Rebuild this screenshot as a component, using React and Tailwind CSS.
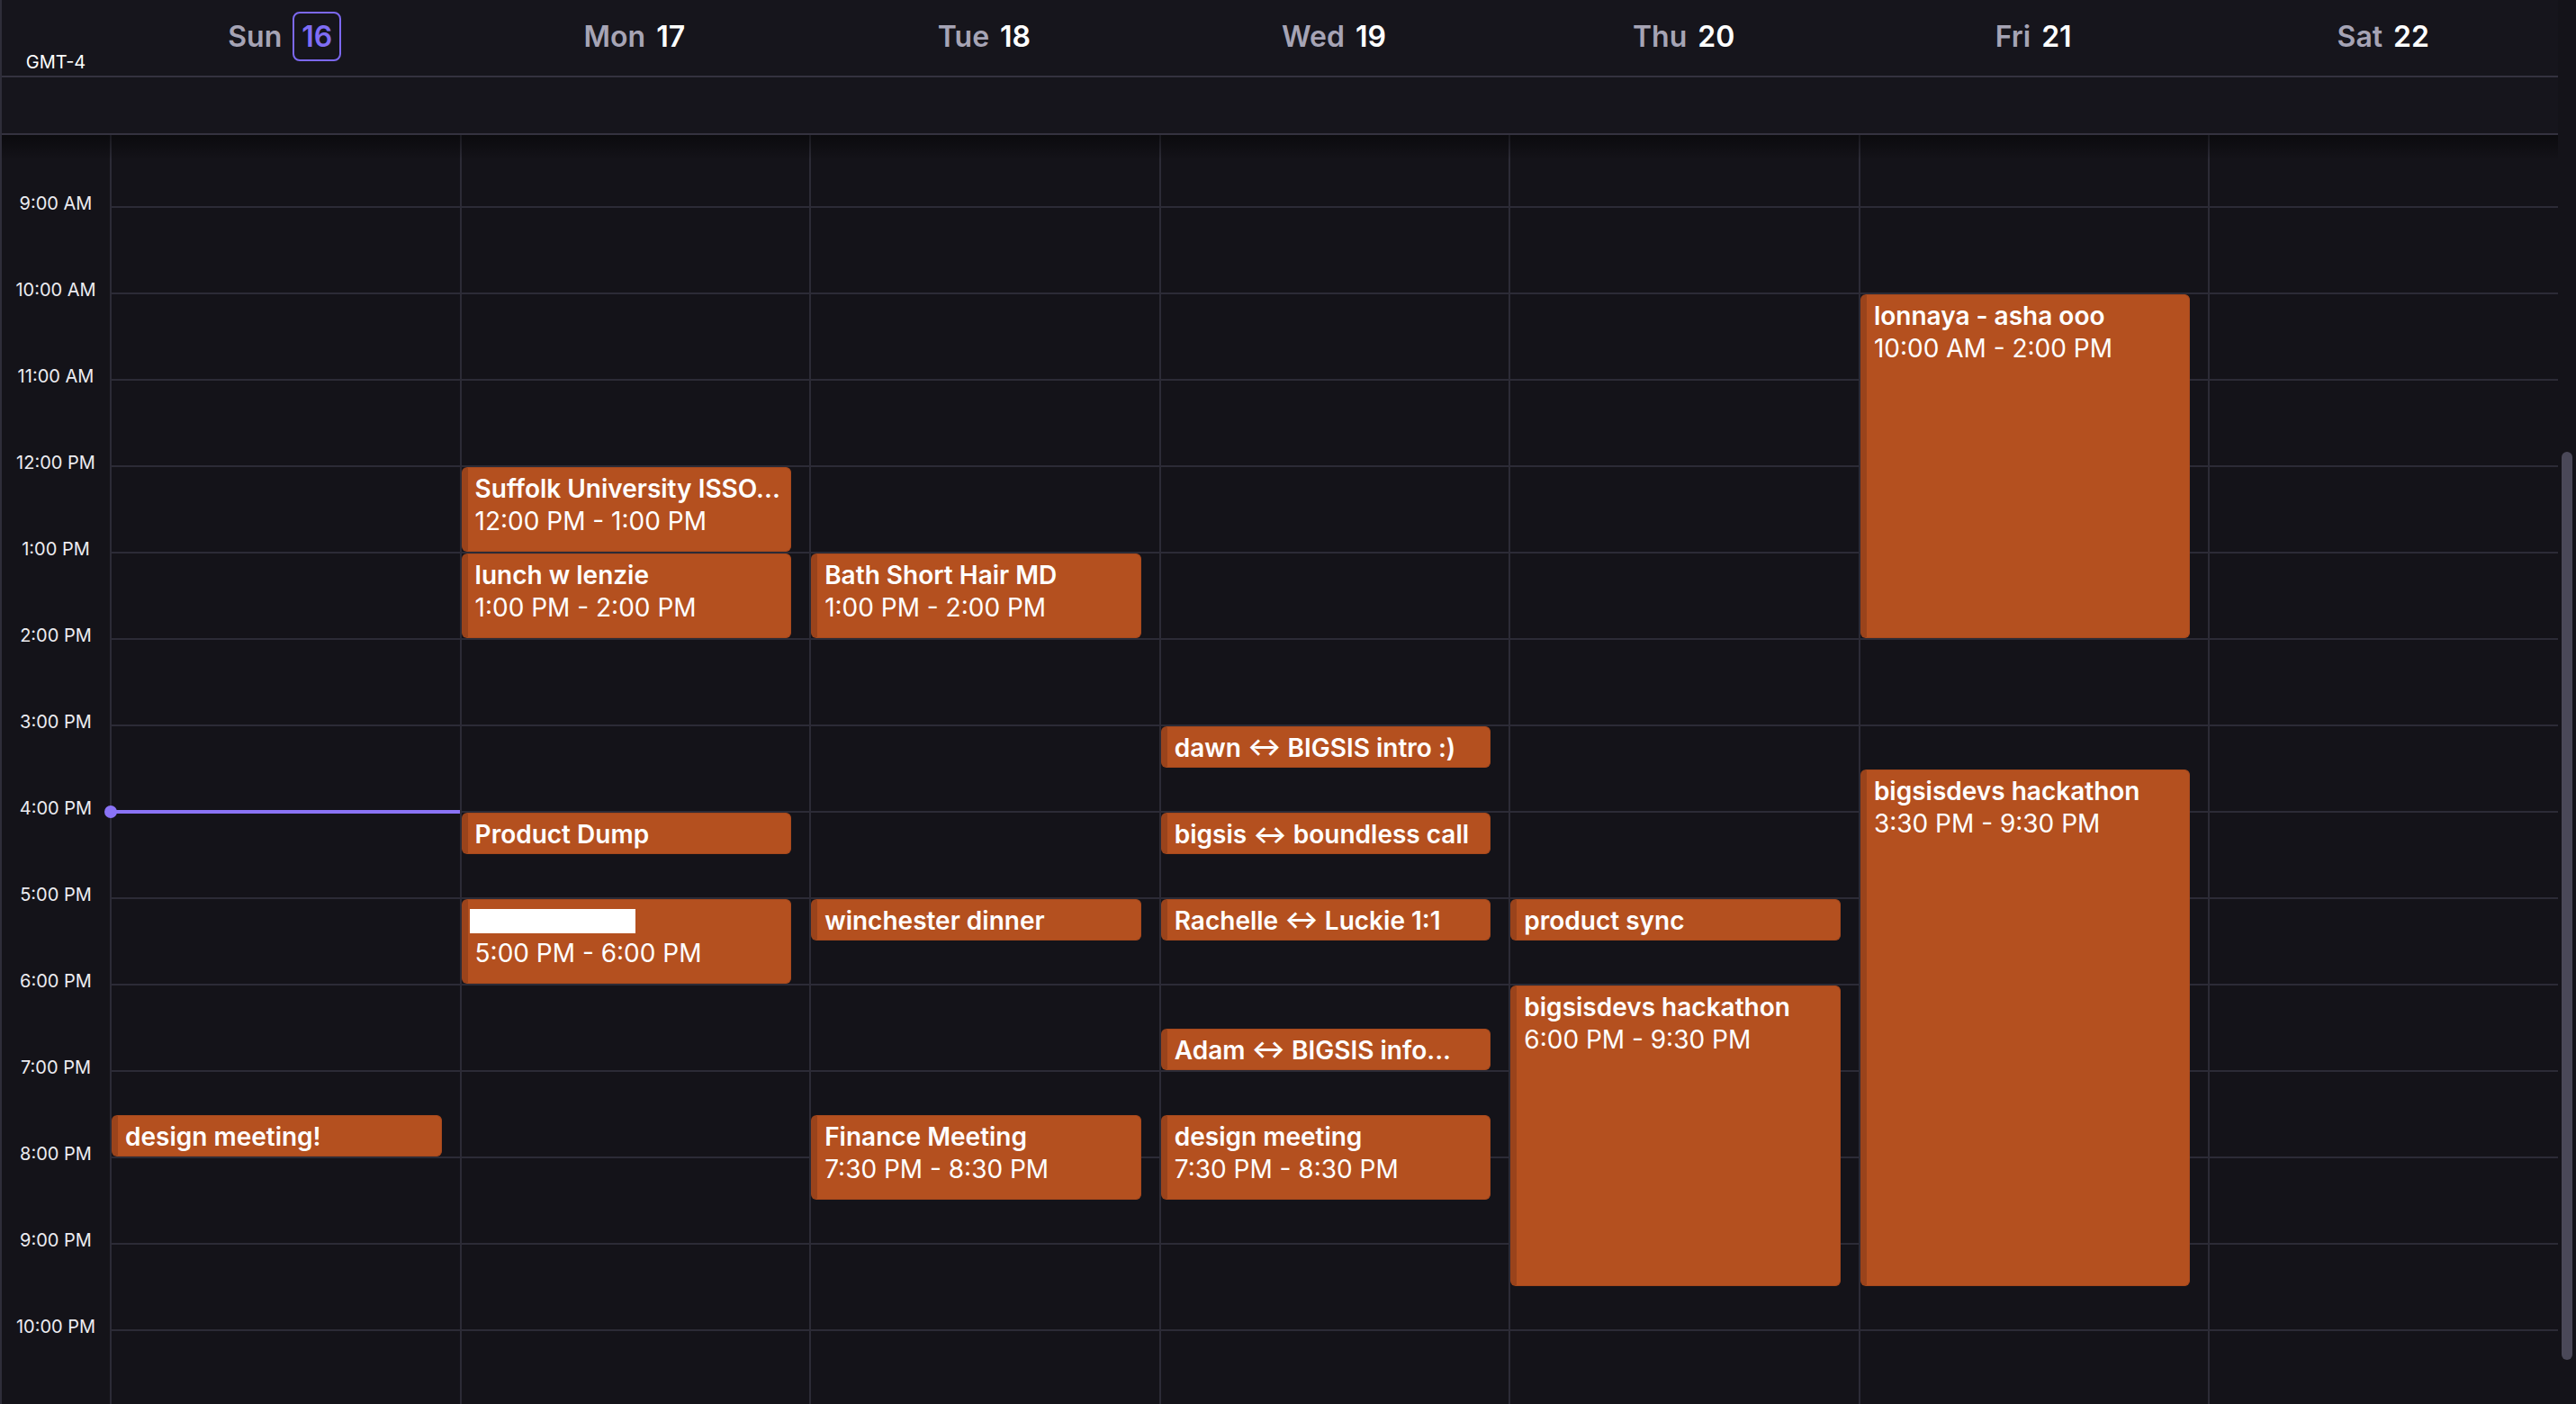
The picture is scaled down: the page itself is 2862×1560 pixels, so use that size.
import React from "react";

const days = [
  { name: "Sun", num: 16, today: true },
  { name: "Mon", num: 17 },
  { name: "Tue", num: 18 },
  { name: "Wed", num: 19 },
  { name: "Thu", num: 20 },
  { name: "Fri", num: 21 },
  { name: "Sat", num: 22 },
];

const hours = [
  "8:00 AM", "9:00 AM", "10:00 AM", "11:00 AM", "12:00 PM", "1:00 PM", "2:00 PM", "3:00 PM",
  "4:00 PM", "5:00 PM", "6:00 PM", "7:00 PM", "8:00 PM", "9:00 PM", "10:00 PM", "11:00 PM",
];

const HOUR = 96;
const FIRST = 8;

const events = [
  { day: 0, start: 19.5, end: 20, title: "design meeting!" },
  { day: 1, start: 12, end: 13, title: "Suffolk University ISSO...", time: "12:00 PM - 1:00 PM" },
  { day: 1, start: 13, end: 14, title: "lunch w lenzie", time: "1:00 PM - 2:00 PM" },
  { day: 1, start: 16, end: 16.5, title: "Product Dump" },
  { day: 1, start: 17, end: 18, redacted: true, time: "5:00 PM - 6:00 PM" },
  { day: 2, start: 13, end: 14, title: "Bath Short Hair MD", time: "1:00 PM - 2:00 PM" },
  { day: 2, start: 17, end: 17.5, title: "winchester dinner" },
  { day: 2, start: 19.5, end: 20.5, title: "Finance Meeting", time: "7:30 PM - 8:30 PM" },
  { day: 3, start: 15, end: 15.5, title: "dawn ↔ BIGSIS intro :)" },
  { day: 3, start: 16, end: 16.5, title: "bigsis ↔ boundless call" },
  { day: 3, start: 17, end: 17.5, title: "Rachelle ↔ Luckie 1:1" },
  { day: 3, start: 18.5, end: 19, title: "Adam ↔ BIGSIS info..." },
  { day: 3, start: 19.5, end: 20.5, title: "design meeting", time: "7:30 PM - 8:30 PM" },
  { day: 4, start: 17, end: 17.5, title: "product sync" },
  { day: 4, start: 18, end: 21.5, title: "bigsisdevs hackathon", time: "6:00 PM - 9:30 PM" },
  { day: 5, start: 10, end: 14, title: "lonnaya - asha ooo", time: "10:00 AM - 2:00 PM" },
  { day: 5, start: 15.5, end: 21.5, title: "bigsisdevs hackathon", time: "3:30 PM - 9:30 PM" },
];

const Event = ({ ev }) => (
  <div
    className="absolute left-0 right-[20px] rounded-md overflow-hidden bg-[#b4501f] border border-[#a7491d] border-l-[7px] border-l-[#9a431b] pl-[8px] pr-2 pt-[6px] text-white"
    style={{ top: (ev.start - FIRST) * HOUR + 2, height: (ev.end - ev.start) * HOUR - 2 }}
  >
    {ev.redacted ? (
      <div className="h-[34px] flex items-center">
        <div className="-ml-[6px] w-[184px] h-[27px] bg-white" />
      </div>
    ) : (
      <div className="text-[28px] leading-[34px] font-semibold truncate">{ev.title}</div>
    )}
    {ev.time && <div className="mt-[2px] text-[28px] leading-[34px] truncate">{ev.time}</div>}
  </div>
);

export default function App() {
  return (
    <div className="w-[2862px] h-[1560px] flex bg-[#141319] overflow-hidden font-['Inter','Noto_Sans',sans-serif] text-white">
      <div className="w-[2842px] flex flex-col border-l-2 border-[#2e2d39]">
        {/* header */}
        <div className="h-[86px] shrink-0 flex bg-[#16151c] border-b-2 border-[#34323f]">
          <div className="w-[120px] flex items-end justify-center pb-0 text-[20px]">GMT-4</div>
          {days.map((d) => (
            <div key={d.name} className="flex-1 flex items-center justify-center gap-3 pb-[3px] text-[32px] font-semibold">
              <span className="text-[#a6a4b5]">{d.name}</span>
              {d.today ? (
                <span className="h-[55px] px-[8px] flex items-center rounded-lg border-2 border-[#7c68f0] text-[#7f6df4]">
                  {d.num}
                </span>
              ) : (
                <span>{d.num}</span>
              )}
            </div>
          ))}
        </div>
        {/* all-day row */}
        <div className="h-[64px] shrink-0 bg-[#16151c] border-b-2 border-[#34323f]" />
        {/* body */}
        <div className="flex-1 relative overflow-hidden">
          <div className="flex -mt-[17px]">
            <div className="w-[120px] shrink-0">
              {hours.map((h, i) => (
                <div key={h} className="h-[96px] relative">
                  {i > 0 && i < hours.length - 1 && (
                    <div className="absolute -top-[15px] inset-x-0 h-6 leading-6 text-center text-[20px] text-[#ececf1]">
                      {h}
                    </div>
                  )}
                </div>
              ))}
            </div>
            {days.map((d, di) => (
              <div key={d.name} className="flex-1 relative border-l-2 border-[#2c2b36]">
                {hours.map((h) => (
                  <div key={h} className="h-[96px] border-t-2 border-[#2c2b36]" />
                ))}
                {d.today && (
                  <div className="absolute left-0 right-0 top-[767px] h-[4px] bg-[#8a73f6]">
                    <div className="absolute -left-[8px] -top-[5px] w-[14px] h-[14px] rounded-full bg-[#8a73f6]" />
                  </div>
                )}
                {events.filter((e) => e.day === di).map((ev, k) => (
                  <Event key={k} ev={ev} />
                ))}
              </div>
            ))}
          </div>
          <div className="absolute top-0 inset-x-0 h-[28px] bg-gradient-to-b from-black/45 to-transparent pointer-events-none" />
        </div>
      </div>
      <div className="w-[20px] pt-[502px]">
        <div className="ml-[4px] w-[12px] h-[1009px] rounded-full bg-[#4a4858]" />
      </div>
    </div>
  );
}
